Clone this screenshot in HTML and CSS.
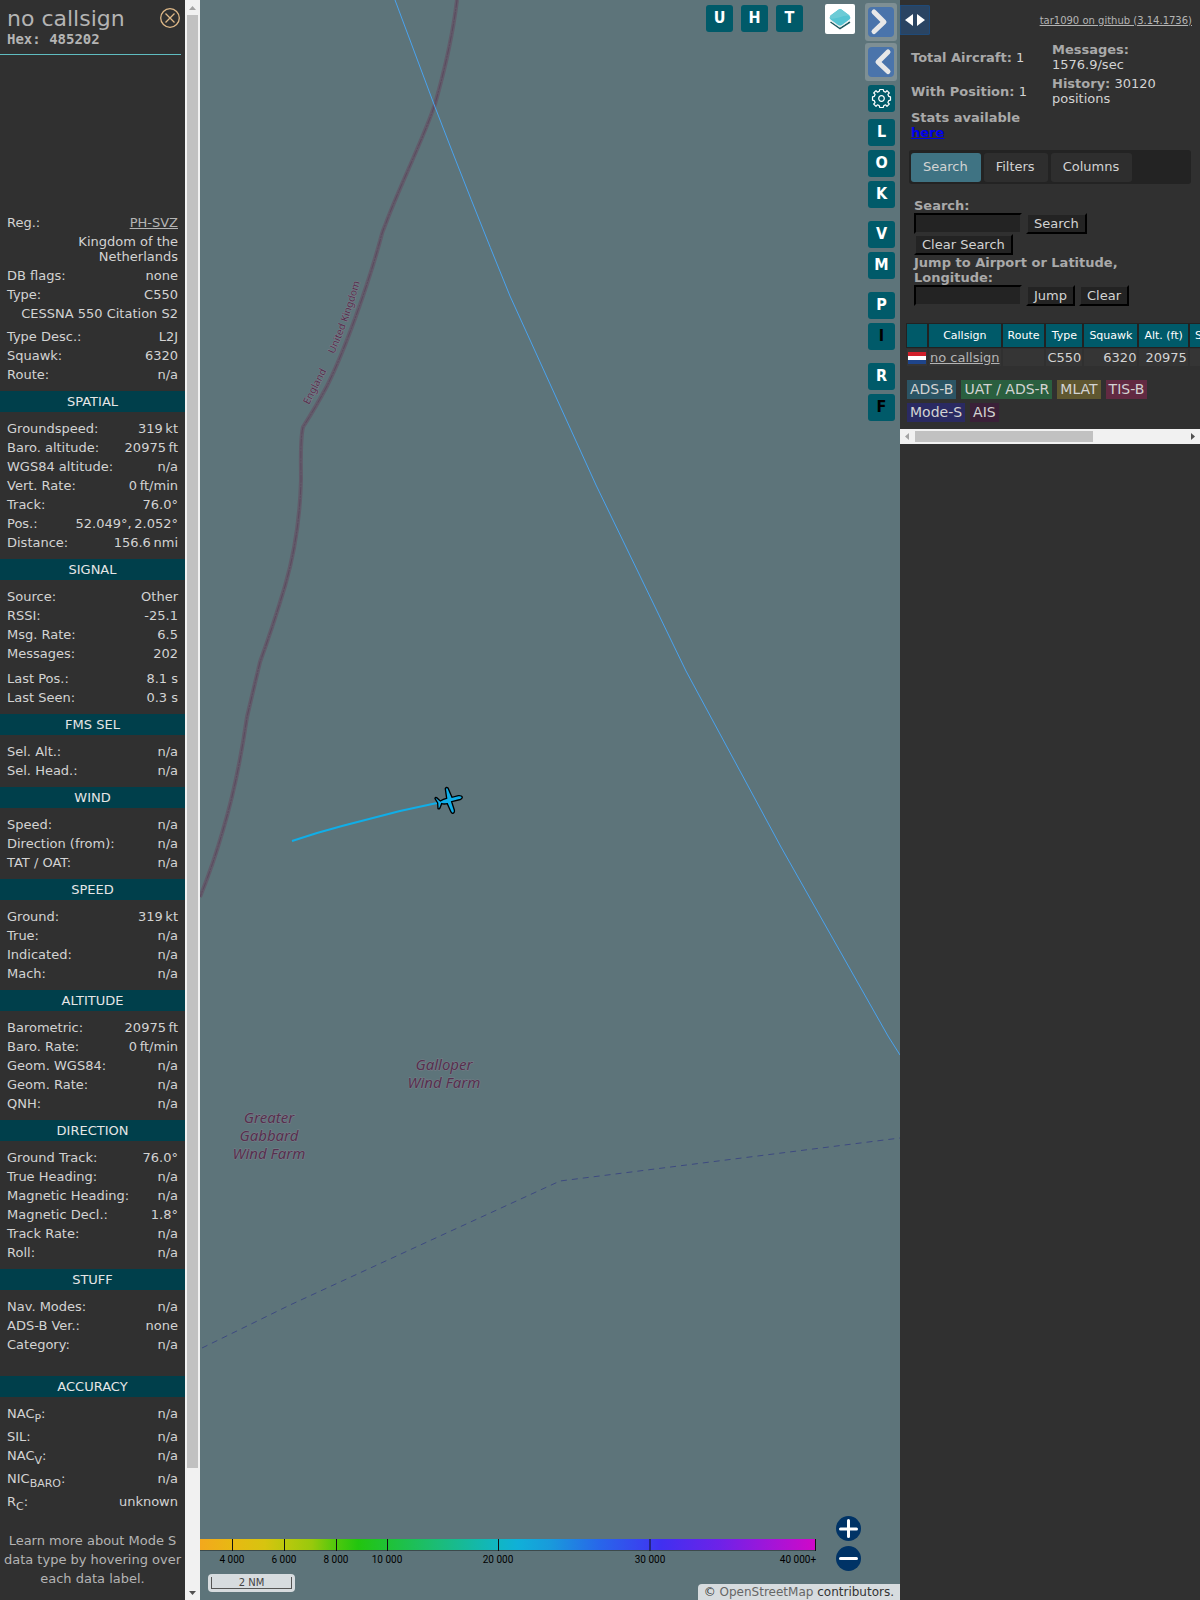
FILE: index.html
```html
<!DOCTYPE html>
<html lang="en">
<head>
  <meta charset="UTF-8">
  <title>tar1090</title>
  <link rel="stylesheet" href="styles.css">
</head>
<body>

  <aside class="info">
    <div class="info-block">
      <header class="info-header">
        <div>
          <h1>no callsign</h1>
          <div class="hex">Hex: 485202</div>
        </div>
        <button class="close" aria-label="Close">
          <svg width="20" height="20" viewBox="0 0 20 20" fill="none" stroke="#deb887" stroke-width="1.3">
            <circle cx="10" cy="10" r="9.3"/>
            <path d="M5.5 5.5 L14.5 14.5 M14.5 5.5 L5.5 14.5"/>
          </svg>
        </button>
      </header>
      <div class="photo"></div>

      <div class="rows">
        <div class="row"><span>Reg.:</span><a href="#reg">PH-SVZ</a></div>
        <div class="country">Kingdom of the Netherlands</div>
        <div class="row"><span>DB flags:</span><span>none</span></div>
        <div class="row"><span>Type:</span><span>C550</span></div>
        <div class="type-long">CESSNA 550 Citation S2</div>
        <div class="row"><span>Type Desc.:</span><span>L2J</span></div>
        <div class="row"><span>Squawk:</span><span>6320</span></div>
        <div class="row"><span>Route:</span><span>n/a</span></div>
      </div>

      <h2>SPATIAL</h2>
      <div class="rows">
        <div class="row"><span>Groundspeed:</span><span>319&#8239;kt</span></div>
        <div class="row"><span>Baro. altitude:</span><span>20975&#8239;ft</span></div>
        <div class="row"><span>WGS84 altitude:</span><span>n/a</span></div>
        <div class="row"><span>Vert. Rate:</span><span>0&#8239;ft/min</span></div>
        <div class="row"><span>Track:</span><span>76.0°</span></div>
        <div class="row"><span>Pos.:</span><span>52.049°,&#8239;2.052°</span></div>
        <div class="row"><span>Distance:</span><span>156.6&#8239;nmi</span></div>
      </div>

      <h2>SIGNAL</h2>
      <div class="rows">
        <div class="row"><span>Source:</span><span>Other</span></div>
        <div class="row"><span>RSSI:</span><span>-25.1</span></div>
        <div class="row"><span>Msg. Rate:</span><span>6.5</span></div>
        <div class="row row-gap"><span>Messages:</span><span>202</span></div>
        <div class="row"><span>Last Pos.:</span><span>8.1 s</span></div>
        <div class="row"><span>Last Seen:</span><span>0.3 s</span></div>
      </div>

      <h2>FMS SEL</h2>
      <div class="rows">
        <div class="row"><span>Sel. Alt.:</span><span>n/a</span></div>
        <div class="row"><span>Sel. Head.:</span><span>n/a</span></div>
      </div>

      <h2>WIND</h2>
      <div class="rows">
        <div class="row"><span>Speed:</span><span>n/a</span></div>
        <div class="row"><span>Direction (from):</span><span>n/a</span></div>
        <div class="row"><span>TAT / OAT:</span><span>n/a</span></div>
      </div>

      <h2>SPEED</h2>
      <div class="rows">
        <div class="row"><span>Ground:</span><span>319&#8239;kt</span></div>
        <div class="row"><span>True:</span><span>n/a</span></div>
        <div class="row"><span>Indicated:</span><span>n/a</span></div>
        <div class="row"><span>Mach:</span><span>n/a</span></div>
      </div>

      <h2>ALTITUDE</h2>
      <div class="rows">
        <div class="row"><span>Barometric:</span><span>20975&#8239;ft</span></div>
        <div class="row"><span>Baro. Rate:</span><span>0&#8239;ft/min</span></div>
        <div class="row"><span>Geom. WGS84:</span><span>n/a</span></div>
        <div class="row"><span>Geom. Rate:</span><span>n/a</span></div>
        <div class="row"><span>QNH:</span><span>n/a</span></div>
      </div>

      <h2>DIRECTION</h2>
      <div class="rows">
        <div class="row"><span>Ground Track:</span><span>76.0°</span></div>
        <div class="row"><span>True Heading:</span><span>n/a</span></div>
        <div class="row"><span>Magnetic Heading:</span><span>n/a</span></div>
        <div class="row"><span>Magnetic Decl.:</span><span>1.8°</span></div>
        <div class="row"><span>Track Rate:</span><span>n/a</span></div>
        <div class="row"><span>Roll:</span><span>n/a</span></div>
      </div>

      <h2>STUFF</h2>
      <div class="rows stuff">
        <div class="row"><span>Nav. Modes:</span><span>n/a</span></div>
        <div class="row"><span>ADS-B Ver.:</span><span>none</span></div>
        <div class="row"><span>Category:</span><span>n/a</span></div>
      </div>

      <h2>ACCURACY</h2>
      <div class="rows">
        <div class="row row-sub"><span>NAC<sub>P</sub>:</span><span>n/a</span></div>
        <div class="row"><span>SIL:</span><span>n/a</span></div>
        <div class="row row-sub"><span>NAC<sub>V</sub>:</span><span>n/a</span></div>
        <div class="row row-sub"><span>NIC<sub>BARO</sub>:</span><span>n/a</span></div>
        <div class="row row-sub"><span>R<sub>C</sub>:</span><span>unknown</span></div>
      </div>
      <p class="hint">Learn more about Mode S data type by hovering over each data label.</p>
    </div>

    <div class="vscroll">
      <svg width="15" height="15" viewBox="0 0 15 15"><path d="M4 10 L7.5 6 L11 10 Z" fill="#a3a3a3"/></svg>
      <div class="vthumb"></div>
      <svg width="15" height="15" viewBox="0 0 15 15"><path d="M4 6 L7.5 10 L11 6 Z" fill="#505050"/></svg>
    </div>
  </aside>

  <main class="map">
    <svg class="map-canvas" viewBox="200 0 700 1600" preserveAspectRatio="xMidYMid slice">
      <defs>
        <path id="uk" d="M334 354 Q348 324 361 278"/>
        <path id="eng" d="M309 405 L331 362"/>
      </defs>
      <path class="border-band" d="M457 0 C454 25 447 62 435 104 C425 135 398 190 386 223 Q382 232 380 241 C368 285 345 350 327 386 Q317 405 303 427 C300 440 301 460 301 480 C300 520 294 555 285 586 C276 616 268 640 260 662 L247 717 C240 765 232 800 223 830 Q213 865 200 897"/>
      <path class="border-line" d="M457 0 C454 25 447 62 435 104 C425 135 398 190 386 223 Q382 232 380 241 C368 285 345 350 327 386 Q317 405 303 427 C300 440 301 460 301 480 C300 520 294 555 285 586 C276 616 268 640 260 662 L247 717 C240 765 232 800 223 830 Q213 865 200 897"/>
      <path class="range" d="M395 0 L435 107 Q470 198 510 296 L596 485 L686 671 L781 847 L888 1036 L900 1055"/>
      <path class="fir" d="M202 1348 L290 1305 L440 1236 L560 1181 L900 1138"/>
      <text class="label-small"><textPath href="#uk">United Kingdom</textPath></text>
      <text class="label-small"><textPath href="#eng">England</textPath></text>
      <text class="label" x="444" y="1070">Galloper<tspan x="444" y="1088">Wind Farm</tspan></text>
      <text class="label" x="269" y="1123">Greater<tspan x="269" y="1141">Gabbard</tspan><tspan x="269" y="1159">Wind Farm</tspan></text>
      <path class="track" d="M292 841 L317 833 L342 826 L400 811 L437 803"/>
      <g transform="translate(280 760) scale(.3333)">
        <path class="plane" d="M547 111 Q547 118 535 120 L515 125 L523 150 Q525 159 517 160 Q514 159 512 154 L502 131 Q492 133 485 131 L480 144 Q477 148 474 146 L473 129 L465 116 Q465 111 470 113 L481 123 Q490 117 500 115 L496 86 Q499 80 504 84 L516 112 L535 107 Q545 106 547 111 Z"/>
      </g>
    </svg>

    <div class="top-buttons">
      <button class="btn">U</button>
      <button class="btn">H</button>
      <button class="btn">T</button>
    </div>

    <button class="layers" aria-label="Layers">
      <svg width="30" height="30" viewBox="0 0 30 30">
        <path d="M5.500 18 L15 24.500 L25 18" fill="none" stroke="#1d5a60" stroke-width="1.500"/>
        <path d="M5.500 16.500 L15 23 L25 16.500" fill="none" stroke="#dfe8e8" stroke-width="1"/>
        <path d="M13.500 5.500 Q15 4.500 16.500 5.500 L24.500 11.500 Q26 13.500 24.500 15.500 L17 21 Q15 22.500 13 21 L5.500 15.500 Q4 13.500 5.500 11.500 Z" fill="#55c4d2"/>
        <path d="M14 5.500 Q15 4.500 16.500 5.500 L24.500 11.500 Q20 11 14 13.500 Q9 15 5 14.500 Q4.500 13 5.500 11.500 Z" fill="#6ccbd6"/>
      </svg>
    </button>

    <div class="side-buttons">
      <button class="arrow" aria-label="Collapse sidebar">
        <svg width="26" height="30" viewBox="0 0 26 30"><path d="M6 5 L16 15 L6 24.500" fill="none" stroke="#e8e8e8" stroke-width="5" stroke-linecap="round" stroke-linejoin="round"/></svg>
      </button>
      <button class="arrow" aria-label="Expand sidebar">
        <svg width="26" height="30" viewBox="0 0 26 30"><path d="M20 5 L10 15 L20 24.500" fill="none" stroke="#e8e8e8" stroke-width="5" stroke-linecap="round" stroke-linejoin="round"/></svg>
      </button>
      <div class="group settings">
        <button class="btn" aria-label="Settings">
          <svg width="21" height="21" viewBox="-10.500 -10.500 21 21" fill="none" stroke="#fff" stroke-width="1.200" stroke-linejoin="round">
            <circle r="2.800"/>
            <path d="M-1.700 -9 L1.700 -9 L2.300 -7.100 L4.200 -6.300 L5.500 -7.800 L7.800 -5.500 L6.400 -4.100 L7.200 -2.200 L9 -1.700 L9 1.700 L7.200 2.200 L6.400 4.100 L7.800 5.500 L5.500 7.800 L4.200 6.300 L2.300 7.100 L1.700 9 L-1.700 9 L-2.300 7.100 L-4.200 6.300 L-5.500 7.800 L-7.800 5.500 L-6.400 4.100 L-7.200 2.200 L-9 1.700 L-9 -1.700 L-7.200 -2.200 L-6.400 -4.100 L-7.800 -5.500 L-5.500 -7.800 L-4.200 -6.300 L-2.300 -7.100 Z"/>
          </svg>
        </button>
      </div>
      <div class="group">
        <button class="btn">L</button>
        <button class="btn">O</button>
        <button class="btn">K</button>
      </div>
      <div class="group">
        <button class="btn">V</button>
        <button class="btn">M</button>
      </div>
      <div class="group">
        <button class="btn">P</button>
        <button class="btn off">I</button>
      </div>
      <div class="group">
        <button class="btn">R</button>
        <button class="btn off">F</button>
      </div>
    </div>

    <div class="legend">
      <svg width="620" height="28" viewBox="200 1538 620 28">
        <defs>
          <linearGradient id="alt" gradientUnits="userSpaceOnUse" x1="200" y1="0" x2="815" y2="0">
            <stop offset="0" stop-color="#f3a81d"/>
            <stop offset=".05" stop-color="#e8b813"/>
            <stop offset=".105" stop-color="#d7c40f"/>
            <stop offset=".137" stop-color="#bcc80d"/>
            <stop offset=".182" stop-color="#98c90c"/>
            <stop offset=".221" stop-color="#4fc80d"/>
            <stop offset=".257" stop-color="#22c50e"/>
            <stop offset=".304" stop-color="#1fc235"/>
            <stop offset=".39" stop-color="#1bbc7a"/>
            <stop offset=".485" stop-color="#10b6c4"/>
            <stop offset=".517" stop-color="#10b0d8"/>
            <stop offset=".57" stop-color="#199adb"/>
            <stop offset=".65" stop-color="#2866ea"/>
            <stop offset=".732" stop-color="#3c3cf0"/>
            <stop offset=".75" stop-color="#4030f0"/>
            <stop offset=".846" stop-color="#6e22e8"/>
            <stop offset=".927" stop-color="#a215d8"/>
            <stop offset="1" stop-color="#d008c8"/>
          </linearGradient>
        </defs>
        <rect x="200" y="1539" width="616" height="12" fill="#3c4a4c"/>
        <rect x="200" y="1539" width="615" height="11" fill="url(#alt)"/>
        <path d="M232.500 1539 V1551 M284.500 1539 V1551 M336.500 1539 V1551 M387.500 1539 V1551 M498.500 1539 V1551 M650 1539 V1551 M815.500 1539 V1551" stroke="#111"/>
        <g class="legend-text">
          <text x="232" y="1563">4 000</text>
          <text x="284" y="1563">6 000</text>
          <text x="336" y="1563">8 000</text>
          <text x="387" y="1563">10 000</text>
          <text x="498" y="1563">20 000</text>
          <text x="650" y="1563">30 000</text>
          <text x="798" y="1563">40 000+</text>
        </g>
      </svg>
    </div>

    <div class="scale"><div class="scale-line">2 NM</div></div>

    <div class="zoom">
      <button aria-label="Zoom in">
        <svg width="25" height="25" viewBox="0 0 25 25"><path d="M12.500 4.500 V20.500 M4.500 13 H20.500" stroke="#fff" stroke-width="3" stroke-linecap="round"/></svg>
      </button>
      <button aria-label="Zoom out">
        <svg width="25" height="25" viewBox="0 0 25 25"><path d="M4.500 12.500 H20.500" stroke="#fff" stroke-width="3" stroke-linecap="round"/></svg>
      </button>
    </div>

    <div class="attribution">© <a href="#osm">OpenStreetMap</a> contributors.</div>
  </main>

  <aside class="sidebar">
    <div class="sidebar-content">
      <div class="sidebar-top">
        <button class="toggle" aria-label="Resize sidebar">
          <svg width="30" height="30" viewBox="0 0 30 30" fill="#fff"><path d="M5 15 L13 9 V21 Z M25 15 L17 9 V21 Z"/></svg>
        </button>
        <a href="#github">tar1090 on github (3.14.1736)</a>
      </div>

      <div class="stats">
        <div><b>Total Aircraft:</b> 1</div>
        <div><b>Messages:</b> 1576.9/sec</div>
        <div><b>With Position:</b> 1</div>
        <div><b>History:</b> 30120 positions</div>
        <div><b>Stats available <a href="#stats">here</a></b></div>
      </div>

      <nav class="tabs">
        <button class="active">Search</button>
        <button>Filters</button>
        <button>Columns</button>
      </nav>

      <form class="search">
        <label for="search">Search:</label>
        <div class="field">
          <input type="text" id="search">
          <button type="button">Search</button>
        </div>
        <div class="field">
          <button type="button">Clear Search</button>
        </div>
        <label for="jump">Jump to Airport or Latitude, Longitude:</label>
        <div class="field">
          <input type="text" id="jump">
          <button type="button">Jump</button>
          <button type="button">Clear</button>
        </div>
      </form>

      <div class="table-wrap">
        <table>
          <thead>
            <tr>
              <th></th><th>Callsign</th><th>Route</th><th>Type</th><th>Squawk</th><th>Alt. (ft)</th><th>Spd. (kt)</th>
            </tr>
          </thead>
          <tbody>
            <tr>
              <td><svg class="flag" width="18" height="12" viewBox="0 0 18 12"><path d="M0 0h18v4H0z" fill="#d01f2a"/><path d="M0 4h18v4H0z" fill="#fff"/><path d="M0 8h18v4H0z" fill="#1e448a"/></svg></td>
              <td><a href="#485202">no callsign</a></td>
              <td></td>
              <td>C550</td>
              <td class="num">6320</td>
              <td class="num">20975</td>
              <td class="num">319</td>
            </tr>
          </tbody>
        </table>
      </div>

      <div class="sources">
        <span class="adsb">ADS-B</span>
        <span class="uat">UAT / ADS-R</span>
        <span class="mlat">MLAT</span>
        <span class="tisb">TIS-B</span>
        <span class="modes">Mode-S</span>
        <span class="ais">AIS</span>
      </div>
    </div>

    <div class="hscroll">
      <svg width="15" height="15" viewBox="0 0 15 15"><path d="M9 4 L5 7.500 L9 11 Z" fill="#a3a3a3"/></svg>
      <div class="htrack"><div class="hthumb"></div></div>
      <svg width="15" height="15" viewBox="0 0 15 15"><path d="M6 4 L10 7.500 L6 11 Z" fill="#505050"/></svg>
    </div>
  </aside>

</body>
</html>
```
FILE: styles.css
```css
* {
  box-sizing: border-box;
}

body {
  margin: 0;
  display: flex;
  min-height: 100vh;
  background-color: #303030;
  color: #d3d3d3;
  font-family: "DejaVu Sans", sans-serif;
  font-size: 13px;
  line-height: 15px;
}

button {
  font: inherit;
  color: inherit;
  border: none;
  padding: 0;
  cursor: pointer;
}

button svg {
  display: block;
}

a {
  color: #b4b4b4;
}

/* selected aircraft panel */
.info {
  display: flex;
  flex: 0 0 200px;
}

.info-block {
  flex: 1;
}

.info-header {
  display: flex;
  justify-content: space-between;
  height: 55px;
  margin-right: 4px;
  padding: 6px 1px 0 7px;
  border-bottom: 1px solid #5fbcc0;
  color: #b4b4b4;
}

h1 {
  margin: 0;
  font-size: 22px;
  font-weight: normal;
  line-height: 25px;
}

.hex {
  font-family: "DejaVu Sans Mono", monospace;
  font-size: 14px;
  font-weight: bold;
  line-height: 16px;
}

.close {
  height: 20px;
  margin-top: 2px;
  background: none;
}

.photo {
  height: 151px;
}

.rows {
  padding: 7px;
}

.row {
  display: flex;
  justify-content: space-between;
  line-height: 19px;
}

.row-gap {
  margin-bottom: 6px;
}

.row-sub {
  min-height: 23px;
}

.row sub {
  font-size: 11px;
  line-height: 12px;
}

.country {
  padding: 2px 0;
  text-align: right;
}

.type-long {
  padding: 2px 0 6px;
  text-align: right;
}

.stuff {
  padding-bottom: 22px;
}

h2 {
  margin: 0;
  background-color: #003f4b;
  color: #e6e6e6;
  font-size: 13px;
  font-weight: normal;
  line-height: 21px;
  text-align: center;
}

.hint {
  margin: 9px 0 0;
  color: #b4b4b4;
  line-height: 19px;
  text-align: center;
}

.vscroll {
  display: flex;
  flex-direction: column;
  width: 15px;
  background-color: #f1f1f1;
}

.vthumb {
  flex: 1;
  margin: 0 2px 117px;
  background-color: #c1c1c1;
}

/* map */
.map {
  position: relative;
  flex: 1;
  overflow: hidden;
  background-color: #5d747a;
}

.map-canvas {
  position: absolute;
  width: 100%;
  height: 100%;
}

.map-canvas path {
  fill: none;
}

.border-band {
  stroke: #625c6b;
  stroke-width: 4;
}

.border-line {
  stroke: #5b4a5f;
  stroke-dasharray: 8 1 2 1;
}

.range {
  stroke: #4aa3ef;
}

.fir {
  stroke: #3d4a80;
  stroke-dasharray: 6 5;
}

.track {
  stroke: #10aee8;
  stroke-width: 2;
}

.map-canvas .plane {
  fill: #10aee8;
  stroke: #000;
  stroke-width: 4;
}

.label,
.label-small {
  font-family: "Noto Sans", sans-serif;
  fill: #56304e;
  stroke: #7b7f8a;
  stroke-width: 1;
  paint-order: stroke;
}

.label {
  font-size: 15px;
  font-style: italic;
  text-anchor: middle;
}

.label-small {
  font-size: 10px;
}

.btn {
  display: flex;
  align-items: center;
  justify-content: center;
  width: 27px;
  height: 27px;
  padding-bottom: 2px;
  border-radius: 3px;
  background-color: #005a69;
  color: #fff;
  font-family: "DejaVu Sans Condensed", "DejaVu Sans", sans-serif;
  font-size: 16px;
  font-weight: bold;
}

.btn.off {
  color: #000;
}

.top-buttons {
  position: absolute;
  top: 5px;
  right: 97px;
  display: flex;
  gap: 8px;
}

.layers {
  position: absolute;
  top: 4px;
  right: 45px;
  border-radius: 2px;
  background-color: #fff;
}

.side-buttons {
  position: absolute;
  top: 3px;
  right: 3px;
  display: flex;
  flex-direction: column;
  gap: 2px;
  width: 32px;
}

.arrow {
  padding: 4px 3px;
  border-radius: 3px;
  background-color: #7e8f94;
}

.arrow svg {
  border-radius: 4px;
  background-color: #4a74ab;
}

.group {
  display: flex;
  flex-direction: column;
  gap: 4px;
  margin: 0 0 11px 3px;
}

.settings {
  margin: 2px 0 5px 3px;
}

.settings .btn {
  padding: 0;
}

.legend {
  position: absolute;
  bottom: 34px;
  left: 0;
}

.legend svg {
  display: block;
}

.legend-text {
  font-family: "Liberation Sans Narrow", Roboto, sans-serif;
  font-size: 10px;
  text-anchor: middle;
}

.scale {
  position: absolute;
  bottom: 8px;
  left: 8px;
  width: 87px;
  padding: 3px;
  border-radius: 4px;
  background-color: #d7dcdf;
}

.scale-line {
  border: 1px solid #555;
  border-top: none;
  color: #444;
  font-size: 10px;
  line-height: 11px;
  text-align: center;
}

.zoom {
  position: absolute;
  right: 39px;
  bottom: 29px;
  display: flex;
  flex-direction: column;
  gap: 5px;
}

.zoom button {
  border-radius: 50%;
  background-color: #003366;
}

.attribution {
  position: absolute;
  right: 0;
  bottom: 0;
  padding: 0 6px;
  border-radius: 4px 0 0;
  background-color: #d7dcdf;
  color: #333;
  font-size: 12px;
  line-height: 16px;
}

.attribution a {
  color: #666;
  text-decoration: none;
}

/* sidebar */
.sidebar {
  flex: 0 0 300px;
  min-width: 0;
}

.sidebar-top {
  display: flex;
  align-items: center;
  justify-content: space-between;
  padding: 5px 8px 5px 0;
  font-size: 10px;
}

.toggle {
  border-radius: 0 2px 2px 0;
  background-color: #2a4462;
  box-shadow: inset 0 0 0 1px #1f4a78;
}

.stats {
  display: grid;
  grid-template-columns: 1fr 1fr;
  gap: 4px 2px;
  align-items: center;
  padding: 2px 9px 10px 11px;
}

.stats b,
.search label {
  color: #a9a9a9;
}

.stats b a {
  color: #0000ee;
}

.tabs {
  display: flex;
  gap: 3px;
  margin: 0 9px;
  padding: 3px 2px 2px;
  border-radius: 3px;
  background-color: #232323;
}

.tabs button {
  padding: 6px 13px 8px 12px;
  border-radius: 3px;
  background-color: #2e2e2e;
}

.tabs .active {
  background-color: #3f7383;
}

.search {
  padding: 14px 14px 16px;
}

.search label {
  display: block;
  font-weight: bold;
}

.field {
  display: flex;
  gap: 4px;
}

.search input {
  width: 108px;
  height: 21px;
  border: 2px solid;
  border-color: #000 #303030 #303030 #000;
  background-color: #232323;
  color: #d3d3d3;
}

.search button {
  height: 21px;
  padding: 0 6px;
  border: 2px solid;
  border-color: #303030 #000 #000 #303030;
  background-color: #232323;
}

.table-wrap {
  overflow: hidden;
  padding-left: 5px;
}

table {
  border-spacing: 2px;
  white-space: nowrap;
}

th {
  height: 23px;
  padding: 0 5px;
  background-color: #005a69;
  box-shadow: 0 0 0 1px #222;
  color: #fff;
  font-size: 11px;
  font-weight: normal;
}

td {
  height: 17px;
  padding: 1px;
  background-color: #353535;
}

.num {
  text-align: right;
}

.flag {
  display: block;
}

.sources {
  display: flex;
  flex-wrap: wrap;
  gap: 4px 5px;
  padding: 12px 7px 7px;
  font-size: 14px;
  line-height: 19px;
}

.sources span {
  padding: 0 3px;
}

.adsb {
  background-color: #2b5464;
}

.uat {
  background-color: #2a5f3f;
}

.mlat {
  background-color: #5f5730;
}

.tisb {
  background-color: #622a42;
}

.modes {
  background-color: #2a2a62;
}

.ais {
  background-color: #3a2038;
}

.hscroll {
  display: flex;
  background-color: #f1f1f1;
}

.htrack {
  flex: 1;
  padding: 2px 0;
}

.hthumb {
  width: 66%;
  height: 11px;
  background-color: #c1c1c1;
}
```
